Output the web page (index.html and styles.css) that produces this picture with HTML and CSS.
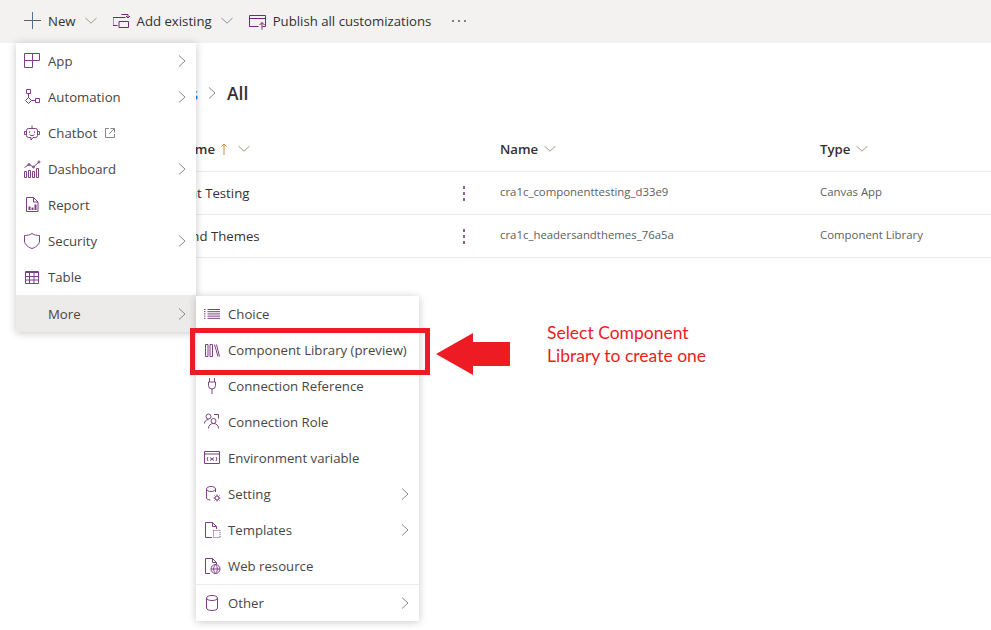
FILE: index.html
```html
<!DOCTYPE html>
<html lang="en">
  <head>
    <meta charset="UTF-8" />
    <title>Solution objects</title>
    <link rel="stylesheet" href="styles.css">
  </head>
  <body>
    <svg class="sprite" width="0" height="0">
      <symbol id="chev-right" viewBox="0 0 8 12"><path d="M1 .5 7 6 1 11.5" fill="none" stroke="currentColor"/></symbol>
      <symbol id="chev-down" viewBox="0 0 12 7"><path d="M.5 1 6 6.2 11.5 1" fill="none" stroke="currentColor"/></symbol>
    </svg>

    <div class="toolbar">
      <svg class="tb-plus" width="17" height="17" viewBox="0 0 17 17"><path d="M0 8.5h17" stroke="#605e5c"/><path d="M8.5 0v17" stroke="#4f7196"/></svg>
      <span class="tb-label">New</span>
      <svg class="tb-chev warm" width="12" height="7"><use href="#chev-down"/></svg>
      <svg class="tb-icon" width="18" height="18" viewBox="0 0 18 18"><path d="M4.500 13.500H0v-8h12.500M6 9.500h9.500v6H6zM8.500 2.500H15v3M13 4l2 2 2-2"/></svg>
      <span class="tb-label">Add existing</span>
      <svg class="tb-chev cool" width="12" height="7"><use href="#chev-down"/></svg>
      <svg class="tb-icon" width="18" height="18" viewBox="0 0 18 18"><path d="M.5 3.500h16v11h-3M.5 3.500v11h9M.5 6.500h16M13 17.500v-7M10.500 13 13 10.500l2.500 2.500"/></svg>
      <span class="tb-label">Publish all customizations</span>
      <span class="tb-more"><i></i><i></i><i></i></span>
    </div>

    <main class="content">
      <div class="crumbs">
        <a class="crumb-link">Objects</a>
        <svg class="crumb-chev" width="8" height="12"><use href="#chev-right"/></svg>
        <h1>All</h1>
      </div>
      <div class="grid">
        <div class="cell head first">Display name <svg class="sort" width="6" height="12" viewBox="0 0 6 12"><path d="M3 12V1M.5 3.500 3 1l2.500 2.500" fill="none" stroke="currentColor"/></svg><svg class="head-chev sort-chev" width="12" height="7"><use href="#chev-down"/></svg></div>
        <div class="cell head">Name <svg class="head-chev" width="12" height="7"><use href="#chev-down"/></svg></div>
        <div class="cell head">Type <svg class="head-chev" width="12" height="7"><use href="#chev-down"/></svg></div>

        <div class="cell first"><span>Component Testing</span><span class="kebab"><i></i><i></i><i></i></span></div>
        <div class="cell small">cra1c_componenttesting_d33e9</div>
        <div class="cell small">Canvas App</div>

        <div class="cell first"><span>Headers and Themes</span><span class="kebab"><i></i><i></i><i></i></span></div>
        <div class="cell small">cra1c_headersandthemes_76a5a</div>
        <div class="cell small">Component Library</div>
      </div>
    </main>

    <ul class="menu menu-new">
      <li class="item"><svg class="ico" viewBox="0 0 18 18"><path d="M1.500 1.500h15v7h-7v7h-8zM9.500 1.500v7h-8"/></svg>App<svg class="chev"><use href="#chev-right"/></svg></li>
      <li class="item"><svg class="ico" viewBox="0 0 18 18"><path d="M3.500 1.500h4v4h-4zM5.500 5.500v4M5.500 9.500l3 3-3 3-3-3zM8.500 12.500h4M12.500 10.500h4v4h-4z"/></svg>Automation<svg class="chev"><use href="#chev-right"/></svg></li>
      <li class="item"><svg class="ico" viewBox="0 0 18 18"><path d="M9 1.500v3M5.500 4.500h7a2 2 0 0 1 2 2v5a2 2 0 0 1-2 2H10l-2 2.500v-2.500H5.500a2 2 0 0 1-2-2v-5a2 2 0 0 1 2-2zM3.500 7.500h-2v3h2M14.500 7.500h2v3h-2M6.500 7.500v1.500M11.500 7.500v1.500M6.500 10.500c1.500 1.500 3.500 1.500 5 0"/></svg>Chatbot<svg class="ext" width="10" height="10" viewBox="0 0 10 10"><path d="M4 .5H.5v9h9V6M5.500.500h4v4M9.500.500 4 6"/></svg></li>
      <li class="item"><svg class="ico" viewBox="0 0 18 18"><path d="M1.500 11.500h2v6h-2zM5.500 10.500h2v7h-2zM9.500 11.500h2v6h-2zM13.500 8.500h2v9h-2zM1.500 7.500 6 4.500l4.500 2.500 5.500-5"/><circle cx="6" cy="4.500" r="1"/><circle cx="10.500" cy="7" r="1"/><circle cx="16" cy="2" r="1"/></svg>Dashboard<svg class="chev"><use href="#chev-right"/></svg></li>
      <li class="item"><svg class="ico" viewBox="0 0 18 18"><path d="M3.500 1.500h7l4.500 4.500v9.500H3.500zM10.500 1.500V6H15"/><path class="solid" d="M5.500 10.500h2v3.500h-2zM8.500 11.500h2V14h-2zM11.500 8.500h2V14h-2z"/></svg>Report</li>
      <li class="item"><svg class="ico" viewBox="0 0 18 18"><path d="M1.500 3.500C4 3.500 7 3 9 1.500c2 1.500 5 2 7.500 2V9c0 4-4.500 6.500-7.500 7.500C6 15.500 1.500 13 1.500 9z"/></svg>Security<svg class="chev"><use href="#chev-right"/></svg></li>
      <li class="item"><svg class="ico" viewBox="0 0 18 18"><path d="M2.500 3.500h13v12h-13zM2.500 4.500h13M2.500 8.500h13M2.500 12h13M6.500 4v11.500M11 4v11.500"/></svg>Table</li>
      <li class="divider flush"></li>
      <li class="item active"><span class="ico"></span>More<svg class="chev"><use href="#chev-right"/></svg></li>
    </ul>

    <ul class="menu menu-more">
      <li class="item"><svg class="ico" viewBox="0 0 18 18"><path d="M1 4.500h1.500M1 6.700h1.500M1 8.900h1.500M1 11.100h1.500M1 13.300h1.500M4.500 4.500H17M4.500 6.700H17M4.500 8.900H17M4.500 11.100H17M4.500 13.300H17"/></svg>Choice</li>
      <li class="item"><svg class="ico" viewBox="0 0 18 18"><path d="M2.500 3.500h2.500v12H2.500zM7 3.500h2.500v12H7zM11.500 3.500l3.500 12M13.500 3.500l3 12"/></svg>Component Library (preview)</li>
      <li class="item"><svg class="ico" viewBox="0 0 18 18"><path d="M6.500 1v4M11.500 1v4M5.500 5h7v3.500a3.500 3.500 0 0 1-7 0zM9 12V17"/></svg>Connection Reference</li>
      <li class="item"><svg class="ico" viewBox="0 0 18 18"><circle cx="5.500" cy="3.500" r="2.500"/><circle cx="10.500" cy="8" r="2.500"/><path d="M1.500 10.500c0-2 1.500-4 4-4M5.500 15.500c0-3 2-5 5-5s5 2 5 5M11 1.500h4.500v4"/></svg>Connection Role</li>
      <li class="item"><svg class="ico" viewBox="0 0 18 18"><path d="M1.500 2.500h15v12h-15zM1.500 5h15M5 8c-1 1.500-1 2.500 0 4M13 8c1 1.500 1 2.500 0 4M7 8.500l4 3M11 8.500l-4 3"/></svg>Environment variable</li>
      <li class="item"><svg class="ico" viewBox="0 0 18 18"><path d="M3.500 4v9c0 1 1.500 2 4 2M12.500 4v3M3.500 4c0-1.500 2-2.500 4.500-2.500s4.500 1 4.500 2.500S10.500 6.500 8 6.500 3.500 5.500 3.500 4z"/><circle cx="14" cy="13" r="2"/><path d="M14 9.500v1.500M14 15v1.500M10.500 13H12M16 13h1.500M11.500 10.500l1 1M15.500 14.500l1 1M16.500 10.500l-1 1M12.500 14.500l-1 1"/></svg>Setting<svg class="chev"><use href="#chev-right"/></svg></li>
      <li class="item"><svg class="ico" viewBox="0 0 18 18"><path d="M9 16.500H2.500v-15h7l4 4V8M9.500 1.500v4h4"/><path class="dots" d="M10.500 9.500h6.500v7h-6.500z"/></svg>Templates<svg class="chev"><use href="#chev-right"/></svg></li>
      <li class="item"><svg class="ico" viewBox="0 0 18 18"><path d="M7 16.500H2.500v-15h7l4 4V7M9.500 1.500v4h4"/><circle cx="12.500" cy="12" r="4.500"/><path d="M8 12h9M12.500 7.500c-2.500 3-2.500 6 0 9M12.500 7.500c2.500 3 2.500 6 0 9"/></svg>Web resource</li>
      <li class="divider"></li>
      <li class="item"><svg class="ico" viewBox="0 0 18 18"><path d="M3.500 4v10c0 1.500 2.500 2.500 5.500 2.500s5.500-1 5.500-2.500V4M3.500 4C3.500 2.500 6 1.500 9 1.500s5.500 1 5.500 2.500S12 6.500 9 6.500 3.500 5.500 3.500 4z"/></svg>Other<svg class="chev"><use href="#chev-right"/></svg></li>
    </ul>

    <div class="callout-box"></div>
    <svg class="callout-arrow" width="76" height="44" viewBox="0 0 76 44"><path d="M0 21 37 0v9h37v24H37v9z"/></svg>
    <p class="callout-text">Select Component<br>Library to create one</p>
  </body>
</html>
```

FILE: styles.css
```css
html,
body {
  margin: 0;
  padding: 0;
}
body {
  position: relative;
  width: 991px;
  height: 630px;
  overflow: hidden;
  background: #fff;
  font-family: "Open Sans", "Noto Sans", sans-serif;
  font-size: 13.2px;
  color: #323130;
}
.sprite {
  position: absolute;
}

/* top command bar */
.toolbar {
  display: flex;
  align-items: center;
  height: 43px;
  padding: 0 0 2px 24px;
  background: #f3f2f1;
  box-sizing: border-box;
}
.tb-plus {
  margin-right: 7px;
}
.tb-label {
  white-space: nowrap;
}
.tb-chev {
  margin: 0 16px 0 9px;
}
.tb-chev.warm {
  color: #a6947f;
}
.tb-chev.cool {
  color: #7f93a8;
}
.tb-icon {
  margin-right: 6px;
  fill: none;
  stroke: #742774;
}
.tb-more {
  display: flex;
  gap: 4px;
  margin-left: 21px;
}
.tb-more i {
  width: 2px;
  height: 2px;
  border-radius: 50%;
  background: #605e5c;
}

/* breadcrumb and grid */
.content {
  padding-top: 36px;
}
.crumbs {
  display: flex;
  align-items: center;
  height: 28px;
  padding-left: 136px;
}
.crumb-link {
  width: 62px;
  font-size: 17px;
  text-align: right;
  color: #0078d4;
}
.crumb-chev {
  margin: 0 11px 0 10px;
  color: #8a8886;
}
h1 {
  margin: 0;
  font-size: 17.5px;
  font-weight: 600;
  line-height: 28px;
}
.grid {
  display: grid;
  grid-template-columns: 371px 320px 171px;
  margin: 21px 0 0 129px;
}
.cell {
  display: flex;
  align-items: center;
  height: 43px;
  white-space: nowrap;
  border-bottom: 1px solid #edebe9;
  box-sizing: border-box;
}
.head {
  height: 44px;
  padding-bottom: 2px;
  font-weight: 600;
  gap: 6px;
}
.first {
  justify-content: space-between;
  padding-right: 35px;
}
.head.first {
  justify-content: flex-start;
}
.small {
  padding-bottom: 3px;
  font-size: 11.4px;
  color: #605e5c;
}
.sort {
  color: #d08a3a;
}
.sort-chev {
  margin-left: 5px;
}
.head-chev {
  color: #a6947f;
}
.kebab {
  display: flex;
  flex-direction: column;
  gap: 3px;
}
.kebab i {
  width: 2px;
  height: 3px;
  background: #8e5f93;
}

/* flyout menus */
.menu {
  position: absolute;
  margin: 0;
  padding: 0;
  list-style: none;
  background: #fff;
  box-shadow: 0 1px 8px rgba(0, 0, 0, 0.22);
}
.menu-new {
  left: 16px;
  top: 43px;
  width: 180px;
}
.menu-more {
  left: 196px;
  top: 296px;
  width: 223px;
}
.item {
  display: flex;
  align-items: center;
  height: 36px;
  padding: 0 10px 0 7px;
  color: #484644;
  white-space: nowrap;
}
.item.active {
  background: #edebe9;
}
.ico {
  flex: none;
  width: 18px;
  height: 18px;
  margin-right: 7px;
  fill: none;
  stroke: #7f3f85;
  stroke-width: 1;
}
.ico .solid {
  fill: #7f3f85;
  stroke: none;
}
.ico .dots {
  stroke-dasharray: 1 1;
}
.chev {
  width: 8px;
  height: 12px;
  margin-left: auto;
  color: #8a8886;
}
.ext {
  margin-left: 8px;
  fill: none;
  stroke: #8a8886;
}
.divider {
  height: 1px;
  background: #edebe9;
}

/* red annotations on top of the screenshot */
.callout-box {
  position: absolute;
  left: 190px;
  top: 328px;
  width: 240px;
  height: 47px;
  border: 5px solid #ed1c24;
  box-sizing: border-box;
}
.callout-arrow {
  position: absolute;
  left: 436px;
  top: 333px;
  fill: #ed1c24;
}
.callout-text {
  position: absolute;
  left: 547px;
  top: 321px;
  margin: 0;
  font-family: Lato, "Open Sans", sans-serif;
  font-size: 17.5px;
  line-height: 23px;
  color: #ed1c24;
}
```
